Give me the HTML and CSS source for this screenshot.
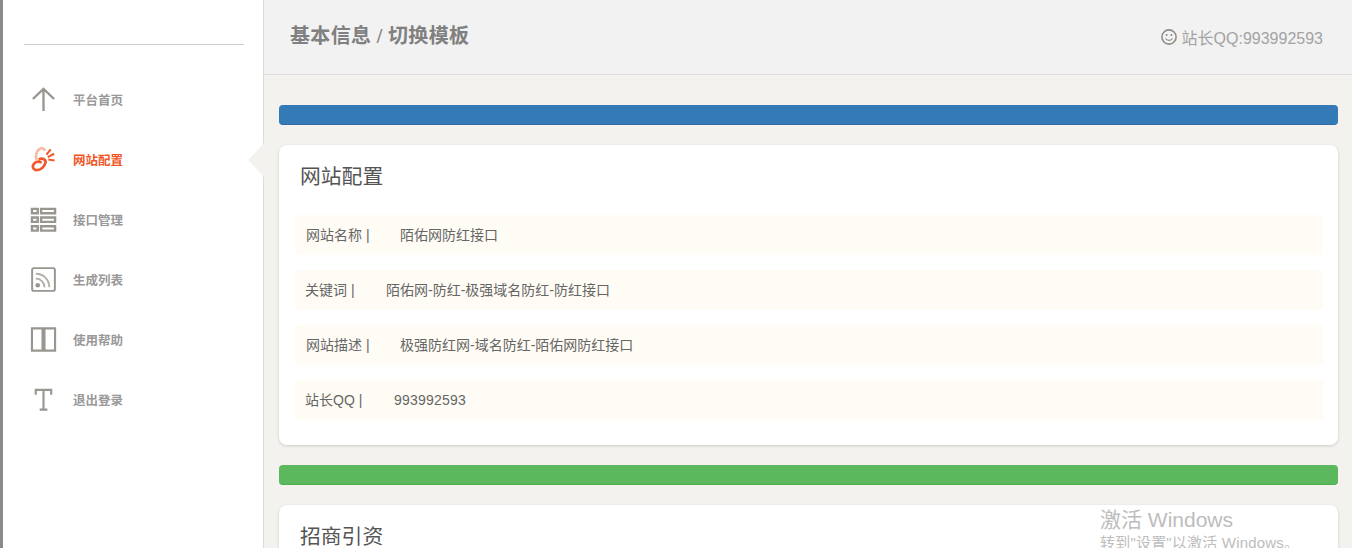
FILE: index.html
```html
<!DOCTYPE html>
<html lang="zh-CN">
<head>
<meta charset="utf-8">
<title>基本信息 / 切换模板</title>
<link rel="stylesheet" href="styles.css">
</head>
<body>
<div class="app">
  <aside class="sidebar">
    <div class="brand"></div>
    <nav class="nav">
      <a class="nav-item">
        <svg class="nav-icon" viewBox="0 0 28 28"><path d="M14 26V3M3 13.5 14 3l11 10.5" fill="none" stroke="#999690" stroke-width="2.4"/></svg>
        <span>平台首页</span>
      </a>
      <a class="nav-item active">
        <svg class="nav-icon" viewBox="0 0 28 28"><g fill="none" stroke-width="2.800"><path d="M7 15C5 10 7 4 11 2.500c2-.8 4 .5 4.500 2.500" stroke="#f6bca8"/><path d="M9 14c4-2 8 0 7 3.500-1 4-5 7.500-9 7.500-4 0-5-4-3-6.500 2-2.500 6-3 8-1" stroke="#f0582a"/></g><path d="M17 9 21.500 3.500M18.500 11.500 25 8M19 14 25.500 15" fill="none" stroke="#f0582a" stroke-width="2.200"/></svg>
        <span>网站配置</span>
      </a>
      <a class="nav-item">
        <svg class="nav-icon" viewBox="0 0 28 28"><g fill="none" stroke="#999690" stroke-width="2.500"><path d="M2 3h6v4.500H2zM11.500 3H26v4.500H11.500zM2 12h6v4.500H2zM11.500 12H26v4.500H11.500zM2 21h6v4.500H2zM11.500 21H26v4.500H11.500z"/></g></svg>
        <span>接口管理</span>
      </a>
      <a class="nav-item">
        <svg class="nav-icon" viewBox="0 0 28 28"><rect x="2.200" y="2.200" width="23.600" height="23.600" rx="2" fill="none" stroke="#999690" stroke-width="2"/><circle cx="8" cy="20" r="2.400" fill="#999690"/><path d="M6 13c5 0 9 4 9 9M6 8c8 0 14 6 14 14" fill="none" stroke="#b3b0aa" stroke-width="2"/></svg>
        <span>生成列表</span>
      </a>
      <a class="nav-item">
        <svg class="nav-icon" viewBox="0 0 28 28"><path d="M2 2.500h11v23H2zM15 2.500h11v23H15z" fill="none" stroke="#999690" stroke-width="2.200"/></svg>
        <span>使用帮助</span>
      </a>
      <a class="nav-item">
        <svg class="nav-icon" viewBox="0 0 28 28"><path d="M14 3.500V24M6 9V4h16v5M10 24.500h8" fill="none" stroke="#999690" stroke-width="2.200"/></svg>
        <span>退出登录</span>
      </a>
    </nav>
    <span class="pointer"></span>
  </aside>
  <div class="main">
    <header class="topbar">
      <h1 class="crumb">基本信息 / 切换模板</h1>
      <div class="contact">
        <svg class="smile" viewBox="0 0 16 16"><g fill="none" stroke="#8f8c86"><circle cx="8" cy="8" r="7.100" stroke-width="1.600"/><path d="M4.500 9.500c1.500 2.500 5.500 2.500 7 0" stroke-width="1.200"/></g><circle cx="5.600" cy="6" r="1" fill="#8f8c86"/><circle cx="10.400" cy="6" r="1" fill="#8f8c86"/></svg>
        <span>站长QQ:993992593</span>
      </div>
    </header>
    <main class="content">
      <div class="bar bar-blue"></div>
      <section class="card">
        <h2 class="card-title">网站配置</h2>
        <div class="rows">
          <div class="row"><span class="label label-a">网站名称 |</span><span>陌佑网防红接口</span></div>
          <div class="row"><span class="label label-b">关键词 |</span><span>陌佑网-防红-极强域名防红-防红接口</span></div>
          <div class="row"><span class="label label-a">网站描述 |</span><span>极强防红网-域名防红-陌佑网防红接口</span></div>
          <div class="row"><span class="label label-c">站长QQ |</span><span class="num">993992593</span></div>
        </div>
      </section>
      <div class="bar bar-green"></div>
      <section class="card">
        <h2 class="card-title">招商引资</h2>
      </section>
    </main>
  </div>
</div>
<div class="watermark">
  <div class="wm-title">激活 Windows</div>
  <div class="wm-sub">转到"设置"以激活 Windows。</div>
</div>
</body>
</html>
```

FILE: styles.css
```css
* { box-sizing: border-box; }
html, body { height: 100%; }
body {
  margin: 0;
  overflow: hidden;
  background: #f3f2ee;
  color: #666;
  font-family: "Liberation Sans", "Noto Sans CJK SC", sans-serif;
  font-size: 14px;
}
.app {
  display: flex;
  height: 100vh;
  overflow: hidden;
  border-left: 3px solid #8a8a8a;
}
.sidebar {
  position: relative;
  flex: 0 0 261px;
  background: #fff;
  border-right: 1px solid #dcdcdc;
  padding: 0 19px 0 21px;
}
.brand {
  height: 45px;
  border-bottom: 1px solid #ccc;
}
.nav {
  display: flex;
  flex-direction: column;
  padding-top: 24px;
  margin-left: -21px;
  padding-left: 27px;
}
.nav-item {
  display: flex;
  align-items: center;
  gap: 16px;
  height: 60px;
  color: #999;
  font-size: 12.500px;
  font-weight: bold;
}
.nav-item.active { color: #f0582a; }
.nav-icon {
  flex: none;
  width: 27px;
  height: 27px;
}
.pointer {
  position: absolute;
  top: 143px;
  right: -1px;
  width: 0;
  height: 0;
  border-top: 17px solid transparent;
  border-bottom: 17px solid transparent;
  border-right: 16px solid #f3f2ee;
}
.main {
  flex: 1;
  min-width: 0;
}
.topbar {
  display: flex;
  align-items: center;
  justify-content: space-between;
  height: 75px;
  padding: 0 29px 0 26px;
  background: #f2f2f2;
  border-bottom: 1px solid #dddddd;
}
.crumb {
  margin: -6px 0 0;
  color: #808080;
  font-family: "Liberation Serif", "Noto Sans CJK SC", serif;
  font-size: 20px;
  font-weight: bold;
  letter-spacing: .35px;
}
.contact {
  display: flex;
  align-items: center;
  gap: 5px;
  margin-top: -1px;
  color: #a3a3a3;
  font-size: 16px;
}
.smile { width: 16px; height: 16px; }
.content {
  display: flex;
  flex-direction: column;
  gap: 20px;
  padding: 30px 14px 0 15px;
}
.bar {
  flex: none;
  height: 20px;
  border-radius: 4px;
}
.bar-blue { background: #337ab7; border-bottom: 1px solid #2e6da4; }
.bar-green { background: #5cb85c; border-bottom: 1px solid #4cae4c; }
.card {
  flex: none;
  padding: 16px 15px 25px 16px;
  background: #fff;
  border-radius: 8px;
  box-shadow: 0 1px 3px rgba(120, 115, 100, .3);
}
.card-title {
  margin: 0 0 22px 5px;
  height: 32px;
  color: #555;
  font-size: 20.800px;
  font-weight: normal;
  line-height: 32px;
}
.rows {
  display: flex;
  flex-direction: column;
  gap: 15px;
}
.row {
  display: flex;
  align-items: baseline;
  height: 40px;
  line-height: 41px;
  padding-left: 11px;
  background: #fffcf5;
  border-radius: 4px;
}
.label { color: #666; }
.label-a { width: 94px; }
.label-b { width: 81px; margin-left: -1px; }
.label-c { width: 89px; margin-left: -1px; }
.num { letter-spacing: .2px; }
.watermark {
  position: absolute;
  left: 1100px;
  top: 506px;
  color: #bdbdbd;
  pointer-events: none;
  white-space: nowrap;
  font-family: "Liberation Sans", "Noto Sans CJK SC", sans-serif;
}
.wm-title { font-size: 21px; line-height: 27px; }
.wm-sub { font-size: 15px; line-height: 20px; letter-spacing: .2px; }
```
